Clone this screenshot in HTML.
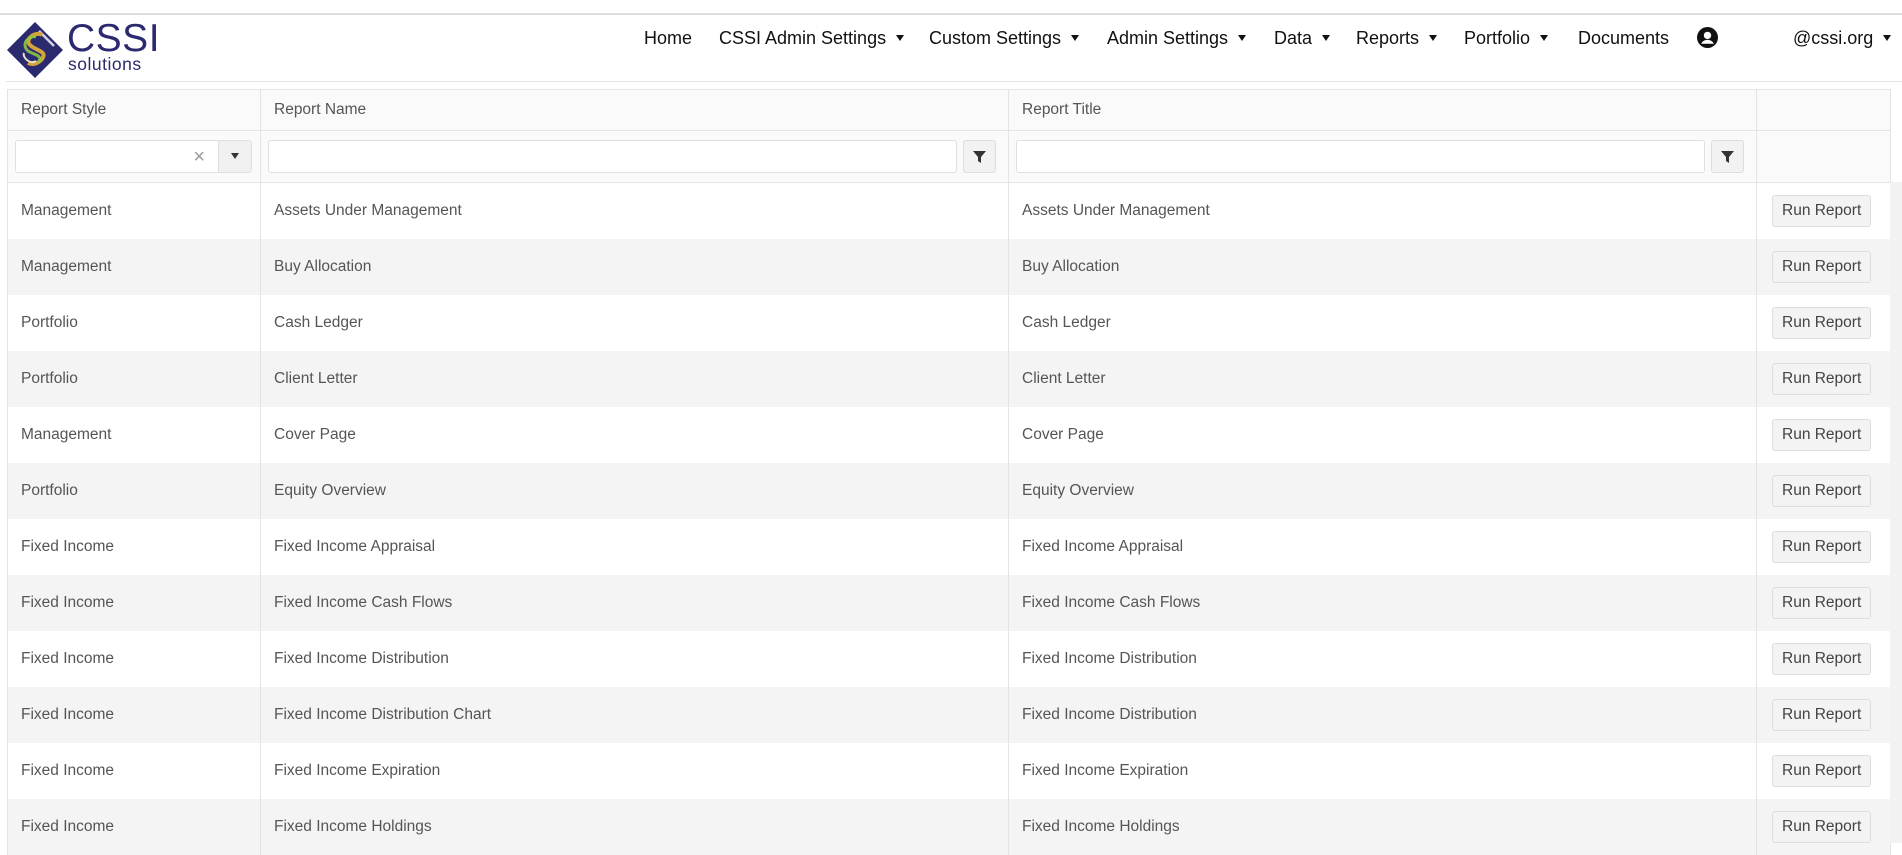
<!DOCTYPE html>
<html><head><meta charset="utf-8"><style>
*{box-sizing:border-box;margin:0;padding:0}
body{width:1902px;height:843px;overflow:hidden;background:#fff;font-family:"Liberation Sans",sans-serif;position:relative}
.topline{position:absolute;left:0;top:13px;width:1902px;height:2px;background:#ddd}
.hdrline{position:absolute;left:6px;top:81px;width:1896px;height:1px;background:#e3e3e3}
.nav{position:absolute;top:28px;font-size:18px;color:#111;white-space:nowrap}
.car{display:inline-block;width:0;height:0;border-left:4px solid transparent;border-right:4px solid transparent;border-top:6px solid #111;margin-left:10px;vertical-align:3px}
table{position:absolute;left:7px;top:89px;border-collapse:collapse;table-layout:fixed}
td{border:1px solid #e4e4e4;font-size:15.5px;color:#555;padding:0 0 0 13px;height:56px;white-space:nowrap}
tr.h td{background:#fafafa;height:41px;color:#555}
tr.f td{background:#fafafa;height:52px;padding:0 7px}
tr.f td.fl{padding:0 12px 0 7px}
tr:nth-child(even).d td{background:#f4f4f4}
tr.d td{border-top:none;border-bottom:none}
.inp{height:33px;border:1px solid #e0e0e0;border-radius:3px;background:#fff;position:relative}
.fb{width:33px;height:33px;border:1px solid #ddd;border-radius:3px;background:#f2f2f2;position:absolute;right:0;top:0}
.btn{display:inline-block;border:1px solid #ddd;border-radius:3px;background:#f3f3f3;color:#444;font-size:15.5px;padding:0 9px;height:32px;line-height:30px}
</style></head><body>
<div class="topline"></div>
<svg style="position:absolute;left:6px;top:21px" width="58" height="58" viewBox="0 0 58 58">
<polygon points="29,1 57,29 29,57 1,29" fill="#2b2a6e"/>
<path d="M33,10 L48,25" stroke="#cfd6e0" stroke-width="2.5"/>
<path d="M36,14 C30,10 18,18 24,24 C30,30 42,30 36,38 C32,43 26,44 22,42" stroke="#d6a23a" stroke-width="4" fill="none"/>
<path d="M30,16 C24,14 14,22 22,30 C28,34 38,34 32,42" stroke="#8ec641" stroke-width="3" fill="none" opacity=".9"/>
<path d="M18,32 C16,36 24,44 30,40" stroke="#e8e0c8" stroke-width="2" fill="none"/>
</svg>
<div style="position:absolute;left:67px;top:19px;font-size:39px;color:#2b2a6e;line-height:40px;letter-spacing:0.5px">CSSI</div>
<div style="position:absolute;left:68px;top:55px;font-size:17.5px;color:#2b2a6e;line-height:18px;letter-spacing:0.5px">solutions</div>
<div class="nav" style="left:644px">Home</div>
<div class="nav" style="left:719px">CSSI Admin Settings<span class="car"></span></div>
<div class="nav" style="left:929px">Custom Settings<span class="car"></span></div>
<div class="nav" style="left:1107px">Admin Settings<span class="car"></span></div>
<div class="nav" style="left:1274px">Data<span class="car"></span></div>
<div class="nav" style="left:1356px">Reports<span class="car"></span></div>
<div class="nav" style="left:1464px">Portfolio<span class="car"></span></div>
<div class="nav" style="left:1578px">Documents</div>
<svg style="position:absolute;left:1697px;top:27px" width="21" height="21" viewBox="0 0 20 20"><circle cx="10" cy="10" r="10" fill="#111"/><circle cx="10" cy="8" r="3.5" fill="#fff"/><path d="M4,16 C6,11 14,11 16,16" fill="#fff"/></svg>
<div class="nav" style="left:1793px">@cssi.org<span class="car"></span></div>
<div class="hdrline"></div>
<table>
<colgroup><col style="width:253px"><col style="width:748px"><col style="width:748px"><col style="width:134px"></colgroup>
<tr class="h"><td>Report Style</td><td>Report Name</td><td>Report Title</td><td></td></tr>
<tr class="f"><td class="fl" style="padding-right:8px"><div class="inp"><span style="position:absolute;right:46px;top:5px;color:#999;font-size:20px">×</span><div style="position:absolute;right:0;top:0;width:33px;height:31px;background:#f0f0f0;border-left:1px solid #ddd"><span class="car" style="margin:12px 0 0 12px;border-top-color:#333"></span></div></div></td>
<td class="fl"><div style="position:relative"><div class="inp" style="margin-right:39px"></div><div class="fb"><svg width="31" height="31" viewBox="0 0 31 31"><path d="M9,10 H22 L17,16 V22 L14,20 V16 Z" fill="#333"/></svg></div></div></td>
<td class="fl"><div style="position:relative"><div class="inp" style="margin-right:39px"></div><div class="fb"><svg width="31" height="31" viewBox="0 0 31 31"><path d="M9,10 H22 L17,16 V22 L14,20 V16 Z" fill="#333"/></svg></div></div></td><td></td></tr>
<tr class="d"><td>Management</td><td>Assets Under Management</td><td>Assets Under Management</td><td style="padding-left:15px"><span class="btn">Run Report</span></td></tr>
<tr class="d"><td>Management</td><td>Buy Allocation</td><td>Buy Allocation</td><td style="padding-left:15px"><span class="btn">Run Report</span></td></tr>
<tr class="d"><td>Portfolio</td><td>Cash Ledger</td><td>Cash Ledger</td><td style="padding-left:15px"><span class="btn">Run Report</span></td></tr>
<tr class="d"><td>Portfolio</td><td>Client Letter</td><td>Client Letter</td><td style="padding-left:15px"><span class="btn">Run Report</span></td></tr>
<tr class="d"><td>Management</td><td>Cover Page</td><td>Cover Page</td><td style="padding-left:15px"><span class="btn">Run Report</span></td></tr>
<tr class="d"><td>Portfolio</td><td>Equity Overview</td><td>Equity Overview</td><td style="padding-left:15px"><span class="btn">Run Report</span></td></tr>
<tr class="d"><td>Fixed Income</td><td>Fixed Income Appraisal</td><td>Fixed Income Appraisal</td><td style="padding-left:15px"><span class="btn">Run Report</span></td></tr>
<tr class="d"><td>Fixed Income</td><td>Fixed Income Cash Flows</td><td>Fixed Income Cash Flows</td><td style="padding-left:15px"><span class="btn">Run Report</span></td></tr>
<tr class="d"><td>Fixed Income</td><td>Fixed Income Distribution</td><td>Fixed Income Distribution</td><td style="padding-left:15px"><span class="btn">Run Report</span></td></tr>
<tr class="d"><td>Fixed Income</td><td>Fixed Income Distribution Chart</td><td>Fixed Income Distribution</td><td style="padding-left:15px"><span class="btn">Run Report</span></td></tr>
<tr class="d"><td>Fixed Income</td><td>Fixed Income Expiration</td><td>Fixed Income Expiration</td><td style="padding-left:15px"><span class="btn">Run Report</span></td></tr>
<tr class="d"><td>Fixed Income</td><td>Fixed Income Holdings</td><td>Fixed Income Holdings</td><td style="padding-left:15px"><span class="btn">Run Report</span></td></tr>
</table>
<div style="position:absolute;left:1890px;top:182px;width:12px;height:661px;background:#f2f2f2"></div>
</body></html>
